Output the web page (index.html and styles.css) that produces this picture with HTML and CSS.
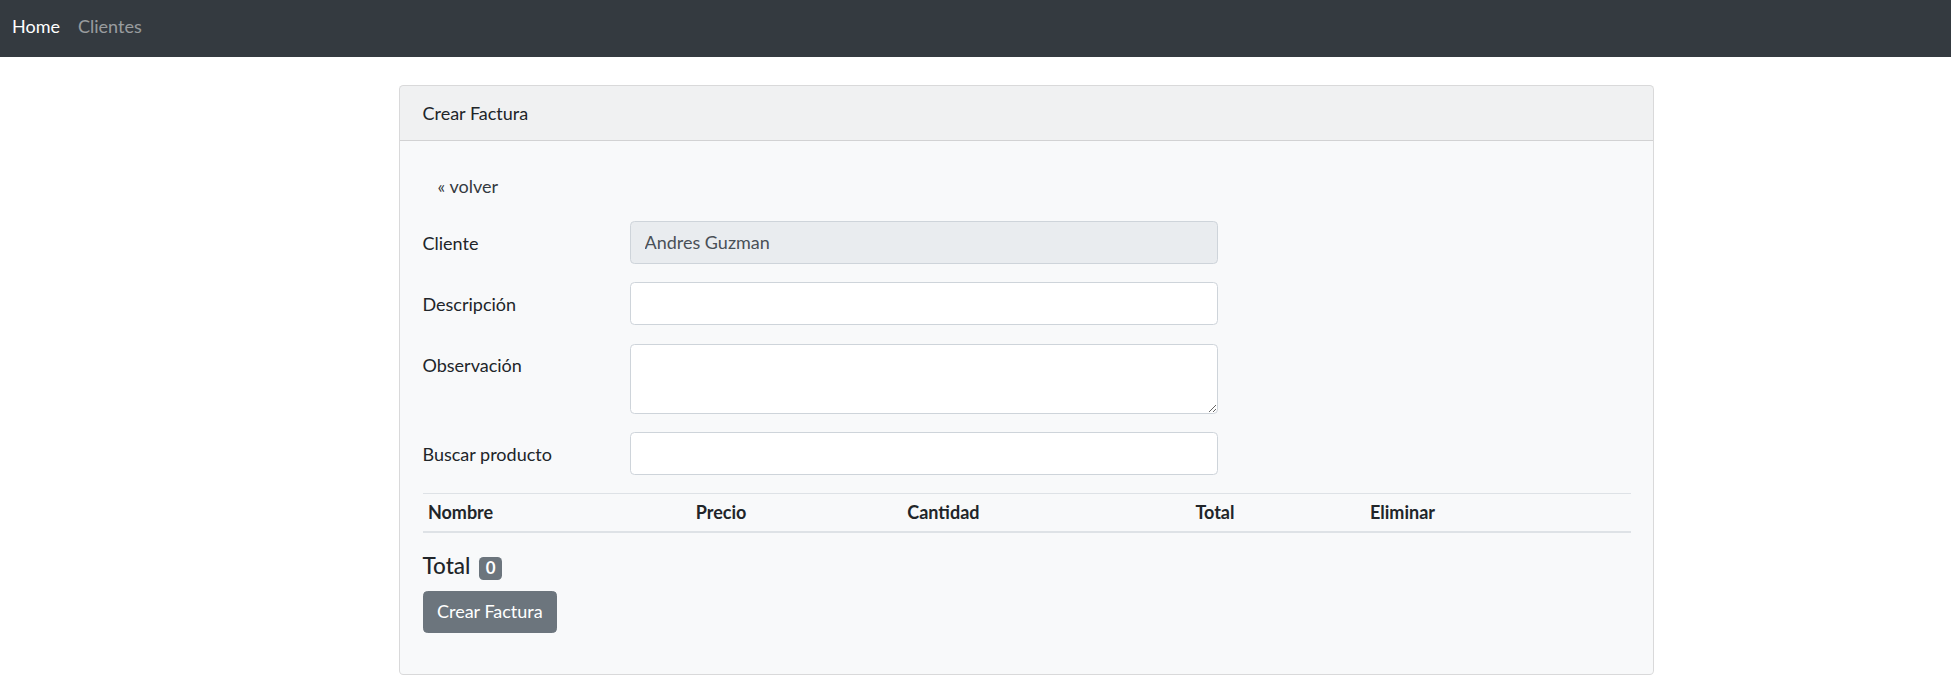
FILE: index.html
```html
<!DOCTYPE html>
<html lang="es">
<head>
<meta charset="utf-8">
<title>Crear Factura</title>
<link rel="stylesheet" href="styles.css">
</head>
<body>
<nav class="navbar">
  <a class="nav-link active" href="#">Home</a>
  <a class="nav-link" href="#">Clientes</a>
</nav>
<main class="page">
  <section class="card">
    <div class="card-header">Crear Factura</div>
    <div class="card-body">
      <div class="back-row"><a class="back-link" href="#">&laquo; volver</a></div>
      <form class="invoice-form">
        <div class="form-row">
          <label class="form-label">Cliente</label>
          <input class="form-control" type="text" value="Andres Guzman" disabled>
        </div>
        <div class="form-row">
          <label class="form-label">Descripción</label>
          <input class="form-control" type="text">
        </div>
        <div class="form-row">
          <label class="form-label">Observación</label>
          <textarea class="form-control form-textarea"></textarea>
        </div>
        <div class="form-row form-row-last">
          <label class="form-label">Buscar producto</label>
          <input class="form-control" type="text">
        </div>
        <table class="items-table">
          <colgroup>
            <col class="col-name"><col class="col-price"><col class="col-qty"><col class="col-total"><col class="col-del">
          </colgroup>
          <thead>
            <tr><th>Nombre</th><th>Precio</th><th>Cantidad</th><th>Total</th><th>Eliminar</th></tr>
          </thead>
          <tbody></tbody>
        </table>
        <h5 class="total-title">Total <span class="badge">0</span></h5>
        <div class="submit-row">
          <button class="btn-submit" type="button">Crear Factura</button>
        </div>
      </form>
    </div>
  </section>
</main>
</body>
</html>
```
FILE: styles.css
```css
html, body {
  margin: 0;
  padding: 0;
  background: #fff;
}
body {
  font-family: "Lato", "Noto Sans", sans-serif;
  font-size: 18px;
  line-height: 27px;
  color: #212529;
}
.navbar {
  display: flex;
  align-items: flex-start;
  height: 57px;
  box-sizing: border-box;
  padding: 13px 3px 0;
  background: #343a40;
}
.nav-link {
  display: block;
  padding: 0 9px;
  line-height: 27px;
  color: rgba(255, 255, 255, 0.5);
  text-decoration: none;
}
.nav-link.active {
  color: #fff;
}
.page {
  padding: 28px 0 0 399px;
}
.card {
  width: 1255px;
  box-sizing: border-box;
  border: 1px solid rgba(0, 0, 0, 0.125);
  border-radius: 4.5px;
  background: #f8f9fa;
  overflow: hidden;
}
.card-header {
  padding: 13.5px 22.5px;
  line-height: 27px;
  background: rgba(0, 0, 0, 0.03);
  border-bottom: 1px solid rgba(0, 0, 0, 0.125);
}
.card-body {
  padding: 22.5px;
}
.back-row {
  padding: 9px 0 3.5px;
  margin-bottom: 18px;
}
.back-link {
  padding: 0 15px;
  color: #343a40;
  text-decoration: none;
}
.invoice-form {
  margin: 0;
}
.form-row {
  display: flex;
  align-items: flex-start;
  margin-bottom: 18.6px;
}
.form-row-last {
  margin-bottom: 17.6px;
}
.form-label {
  width: 207.5px;
  flex: none;
  padding-top: 8.5px;
  line-height: 27px;
}
.form-control {
  display: block;
  width: 587.7px;
  height: 42.75px;
  box-sizing: border-box;
  margin: 0;
  padding: 0 13.5px;
  border: 1px solid #ced4da;
  border-radius: 4.5px;
  background: #fff;
  font-family: inherit;
  font-size: 18px;
  line-height: 27px;
  color: #495057;
}
.form-control:disabled {
  background: #e9ecef;
  opacity: 1;
  color: #495057;
}
.form-textarea {
  height: 70px;
  padding: 6.75px 13.5px;
  resize: vertical;
}
.items-table {
  width: 100%;
  border-collapse: collapse;
  table-layout: fixed;
  margin-bottom: 18.6px;
}
.col-name { width: 267.8px; }
.col-price { width: 211.6px; }
.col-qty { width: 288.1px; }
.col-total { width: 174.6px; }
.col-del { width: auto; }
.items-table th {
  padding: 5.4px;
  text-align: left;
  font-weight: 700;
  line-height: 27px;
  border-top: 1px solid #dee2e6;
  border-bottom: 2px solid #dee2e6;
}
.total-title {
  margin: 0 0 10.2px;
  font-size: 22.5px;
  line-height: 27px;
  font-weight: 500;
}
.badge {
  display: inline-block;
  margin-left: 3px;
  padding: 3.2px 6.5px 3.5px;
  font-size: 16.9px;
  line-height: 1;
  font-weight: 700;
  color: #fff;
  background: #6c757d;
  border-radius: 4.5px;
  vertical-align: baseline;
}
.submit-row {
  margin-bottom: 18px;
}
.btn-submit {
  display: inline-block;
  height: 42.75px;
  box-sizing: border-box;
  padding: 0 13.5px;
  border: 1px solid #6c757d;
  border-radius: 4.5px;
  background: #6c757d;
  color: #fff;
  font-family: inherit;
  font-size: 18px;
  line-height: 27px;
}
```
